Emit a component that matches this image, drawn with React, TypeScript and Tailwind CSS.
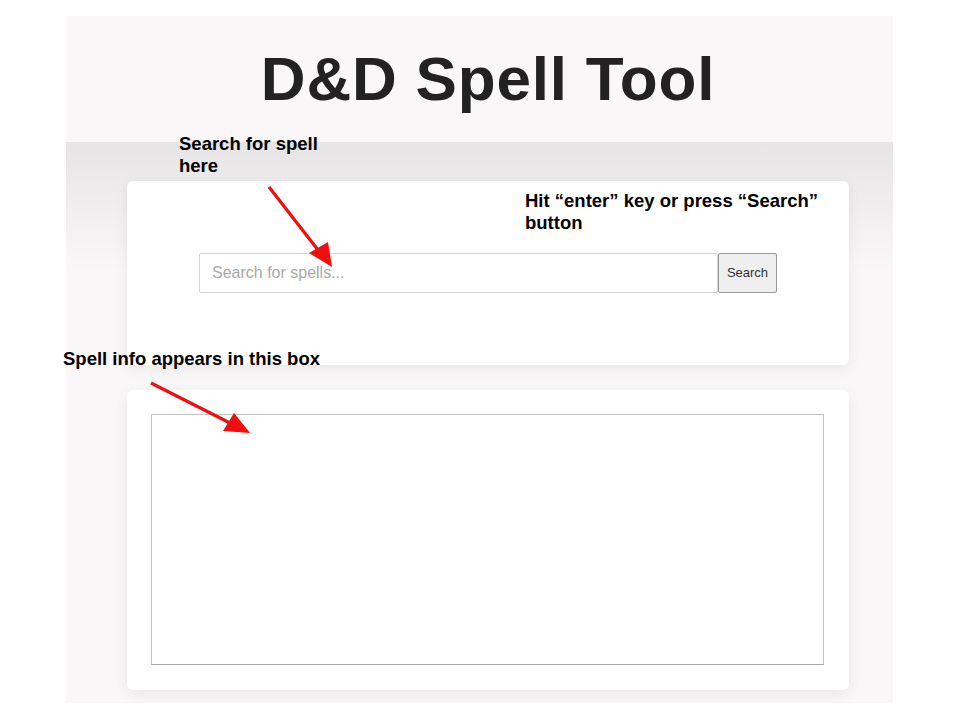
import React from 'react';

const Arrows: React.FC = () => (
  <svg className="absolute inset-0 pointer-events-none" width="960" height="720" viewBox="0 0 960 720">
    <line x1="269" y1="187" x2="318" y2="250" stroke="#f00f0f" strokeWidth="3.2" />
    <polygon points="332,267 309,253 328,242" fill="#f00f0f" />
    <line x1="151" y1="383" x2="232" y2="424" stroke="#f00f0f" strokeWidth="3.2" />
    <polygon points="250,433 223,431 234,413" fill="#f00f0f" />
  </svg>
);

export default function App() {
  return (
    <div className="relative w-[960px] h-[720px] bg-white overflow-hidden font-['Liberation_Sans',Arial,sans-serif]">
      <div className="absolute left-[66px] top-[16px] w-[827px] h-[687px] flex flex-col bg-[#f9f7f8]">
        <header className="h-[126px] flex items-center justify-center pl-[17px] bg-[#f9f7f8]">
          <h1 className="text-[62px] font-bold text-[#222222] tracking-[0.8px] leading-none">D&amp;D Spell Tool</h1>
        </header>
        <main className="flex-1 flex flex-col gap-[25px] pt-[39px] pl-[61px] pr-[44px] bg-[linear-gradient(to_bottom,#e6e4e5,#f9f7f8_130px)]">
          <section className="h-[184px] bg-white rounded-md shadow-[0_4px_14px_rgba(0,0,0,0.07)] pt-[72px] flex justify-center">
            <div className="flex h-[40px]">
              <input
                type="text"
                placeholder="Search for spells..."
                className="w-[519px] h-[40px] border border-[#d4d4d4] rounded-[2px] px-[12px] text-[16px] text-[#333] placeholder:text-[#a9a9a9] bg-white outline-none"
              />
              <button className="w-[59px] h-[40px] border border-[#9a9a9a] rounded-[2px] bg-[#efefef] text-[13px] text-[#333]">
                Search
              </button>
            </div>
          </section>
          <section className="h-[300px] bg-white rounded-md shadow-[0_4px_14px_rgba(0,0,0,0.07)] pt-[24px] pl-[24px] pr-[25px]">
            <div className="h-[251px] border border-[#c4c4c4] border-b-[#a9a9a9] bg-white" />
          </section>
        </main>
      </div>

      <p className="absolute left-[179px] top-[133px] w-[160px] text-[18.5px] leading-[22px] font-bold text-black">
        Search for spell here
      </p>
      <p className="absolute left-[525px] top-[190px] w-[320px] text-[18.5px] leading-[22px] font-bold text-black">
        Hit “enter” key or press “Search” button
      </p>
      <p className="absolute left-[63px] top-[348px] text-[18.5px] leading-[22px] font-bold text-black whitespace-nowrap">
        Spell info appears in this box
      </p>
      <Arrows />
    </div>
  );
}
